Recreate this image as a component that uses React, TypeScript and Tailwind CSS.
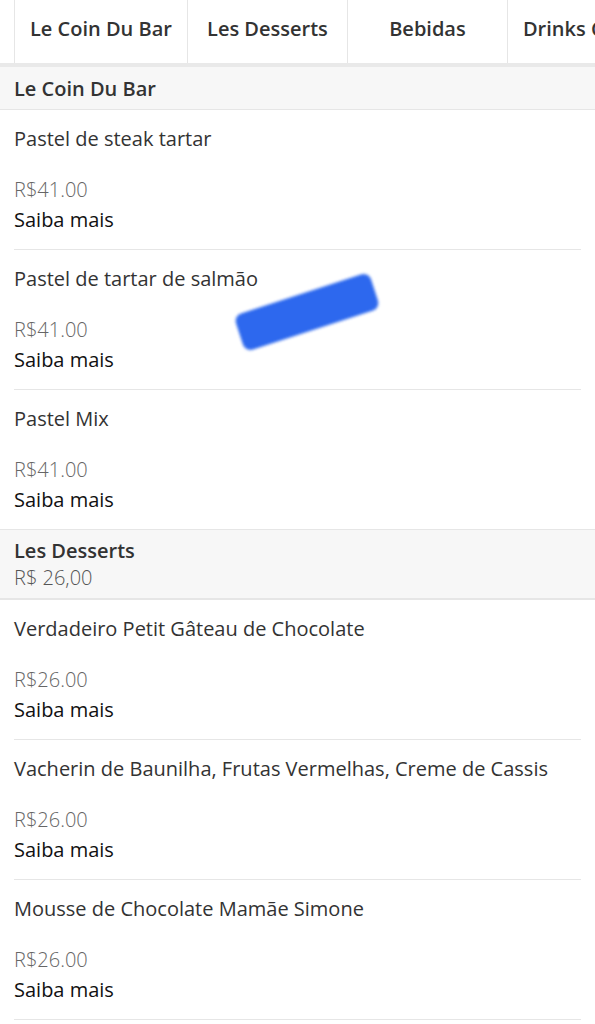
const TABS = ["Le Coin Du Bar", "Les Desserts", "Bebidas", "Drinks Clássicos"];

type Item = { name: string; price: string };

const SECTIONS: { title: string; subtitle?: string; items: Item[] }[] = [
  {
    title: "Le Coin Du Bar",
    items: [
      { name: "Pastel de steak tartar", price: "R$41.00" },
      { name: "Pastel de tartar de salmão", price: "R$41.00" },
      { name: "Pastel Mix", price: "R$41.00" },
    ],
  },
  {
    title: "Les Desserts",
    subtitle: "R$ 26,00",
    items: [
      { name: "Verdadeiro Petit Gâteau de Chocolate", price: "R$26.00" },
      { name: "Vacherin de Baunilha, Frutas Vermelhas, Creme de Cassis", price: "R$26.00" },
      { name: "Mousse de Chocolate Mamãe Simone", price: "R$26.00" },
    ],
  },
];

export default function App() {
  return (
    <div className="relative w-[595px] min-h-[1024px] bg-white overflow-hidden font-['Open_Sans',sans-serif] text-[20px]">
      <nav className="flex h-[67px] pl-[14px] border-b-[4px] border-[#e9e9e9] whitespace-nowrap overflow-hidden">
        {TABS.map((t) => (
          <div
            key={t}
            className="shrink-0 min-w-[160px] px-[15px] pb-[6px] flex items-center justify-center border-l border-[#e6e6e6] font-semibold text-[#333]"
          >
            {t}
          </div>
        ))}
      </nav>

      {SECTIONS.map((s) => (
        <section key={s.title}>
          <div
            className={`bg-[#f7f7f7] px-[14px] border-[#e6e6e6] ${
              s.subtitle ? "pt-[7px] pb-[6px] border-t border-b-2" : "pt-[8px] pb-[7px] border-b"
            }`}
          >
            <h2 className="font-semibold text-[#333] leading-[27px]">{s.title}</h2>
            {s.subtitle && <p className="text-[#555] font-light leading-[28px]">{s.subtitle}</p>}
          </div>
          <ul className="px-[14px]">
            {s.items.map((it, i) => (
              <li
                key={it.name}
                className={`pt-[15px] pb-[16px] ${
                  i < s.items.length - 1 || s.subtitle ? "border-b border-[#e6e6e6]" : ""
                }`}
              >
                <div className="text-[#333] font-normal leading-[27px]">{it.name}</div>
                <div className="mt-[24px] text-[#666] font-light leading-[27px]">{it.price}</div>
                <div className="mt-[3px] text-[#111] leading-[27px]">Saiba mais</div>
              </li>
            ))}
          </ul>
        </section>
      ))}

      <div className="absolute left-[236px] top-[293px] w-[142px] h-[38px] rounded-[8px] bg-[#2d68ee] blur-[1.5px] -rotate-[18deg]" />
    </div>
  );
}
